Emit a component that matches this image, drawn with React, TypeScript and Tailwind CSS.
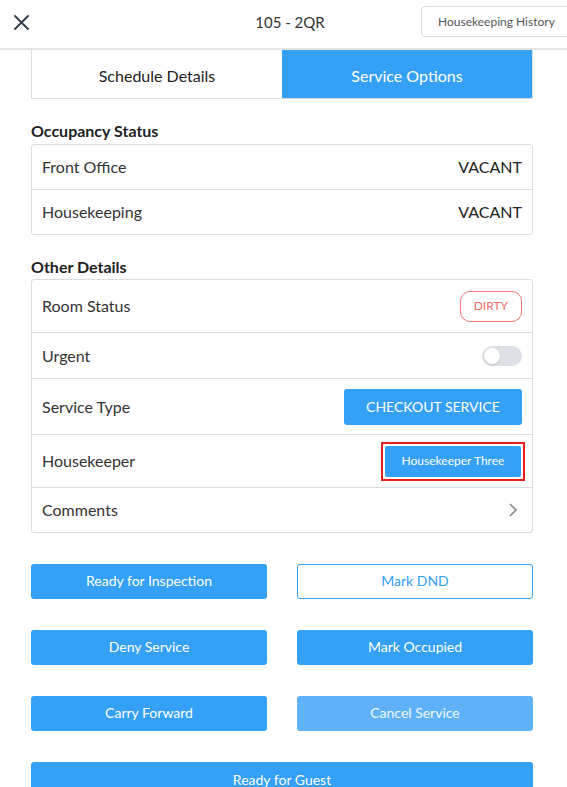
const rowCls = "flex items-center justify-between px-[10px] border-b border-[#dcdcdc] last:border-b-0";

function Row({ label, h, children }: { label: string; h: string; children?: React.ReactNode }) {
  return (
    <div className={`${rowCls} ${h}`}>
      <span className="text-[16px] text-[#333]">{label}</span>
      {children}
    </div>
  );
}

function Btn({ label, variant = "solid" }: { label: string; variant?: "solid" | "outline" | "faded" }) {
  const look =
    variant === "outline"
      ? "bg-white border border-[#34a0f6] text-[#34a0f6]"
      : variant === "faded"
      ? "bg-[#5fb2f8] text-white/90"
      : "bg-[#34a0f6] text-white";
  return (
    <button className={`h-[35px] rounded-[3px] text-[14px] leading-[16px] pb-[2px] flex items-center justify-center ${look}`}>
      {label}
    </button>
  );
}

export default function App() {
  return (
    <div className="w-[567px] h-[787px] overflow-hidden bg-white font-['Lato',sans-serif] text-[#222]">
      {/* header */}
      <header className="relative h-[50px] border-b-2 border-[#e4e4e4] flex items-center justify-center">
        <svg className="absolute left-[14px] top-[15px]" width="15" height="15" viewBox="0 0 15 15">
          <path d="M1 1 L14 14 M14 1 L1 14" stroke="#2f3a48" strokeWidth="1.8" strokeLinecap="round" />
        </svg>
        <span className="text-[15px] text-[#333] -mt-[3px] ml-[13px]">105 - 2QR</span>
        <button className="absolute left-[421px] top-[6px] h-[31px] w-[160px] border border-[#dcdcdc] rounded-[4px] pl-[16px] text-left text-[12px] text-[#555]">
          Housekeeping History
        </button>
      </header>

      <div className="pl-[31px] pr-[34px]">
        {/* tabs */}
        <div className="grid grid-cols-2 h-[49px] border border-[#dcdcdc] border-t-0">
          <div className="flex items-center justify-center pt-[3px] text-[16px] text-[#222]">Schedule Details</div>
          <div className="flex items-center justify-center pt-[3px] text-[16px] text-white bg-[#34a0f6]">Service Options</div>
        </div>

        <h2 className="mt-[22px] text-[16px] font-bold text-[#222] leading-[20px]">Occupancy Status</h2>
        <div className="mt-[3px] border border-[#dcdcdc] rounded-[3px]">
          <Row label="Front Office" h="h-[45px]">
            <span className="text-[16px] text-[#222]">VACANT</span>
          </Row>
          <Row label="Housekeeping" h="h-[44px]">
            <span className="text-[16px] text-[#222]">VACANT</span>
          </Row>
        </div>

        <h2 className="mt-[22px] text-[16px] font-bold text-[#222] leading-[20px]">Other Details</h2>
        <div className="mt-[2px] border border-[#dcdcdc] rounded-[3px]">
          <Row label="Room Status" h="h-[53px]">
            <span className="h-[31px] px-[13px] flex items-center rounded-[10px] border border-[#f57676] text-[12px] text-[#f26b6b]">
              DIRTY
            </span>
          </Row>
          <Row label="Urgent" h="h-[46px]">
            <span className="w-[40px] h-[20px] rounded-full bg-[#dde0e6] flex items-center px-[2px]">
              <span className="w-[16px] h-[16px] rounded-full bg-white shadow-sm" />
            </span>
          </Row>
          <Row label="Service Type" h="h-[56px]">
            <button className="h-[36px] w-[178px] rounded-[3px] bg-[#34a0f6] text-white text-[14px]">CHECKOUT SERVICE</button>
          </Row>
          <Row label="Housekeeper" h="h-[53px]">
            <span className="border-2 border-[#ee1c1c] p-[2px] -mr-[3px]">
              <button className="block h-[31px] w-[136px] rounded-[2px] bg-[#34a0f6] text-white text-[12px]">
                Housekeeper Three
              </button>
            </span>
          </Row>
          <Row label="Comments" h="h-[44px]">
            <svg width="10" height="16" viewBox="0 0 10 16" className="mr-[4px]">
              <path d="M2 2 L8 8 L2 14" fill="none" stroke="#888" strokeWidth="1.6" />
            </svg>
          </Row>
        </div>

        {/* actions */}
        <div className="mt-[31px] grid grid-cols-2 gap-x-[30px] gap-y-[31px]">
          <Btn label="Ready for Inspection" />
          <Btn label="Mark DND" variant="outline" />
          <Btn label="Deny Service" />
          <Btn label="Mark Occupied" />
          <Btn label="Carry Forward" />
          <Btn label="Cancel Service" variant="faded" />
          <div className="col-span-2">
            <button className="w-full h-[36px] rounded-[3px] bg-[#34a0f6] text-white text-[14px] leading-[16px]">Ready for Guest</button>
          </div>
        </div>
      </div>
    </div>
  );
}
